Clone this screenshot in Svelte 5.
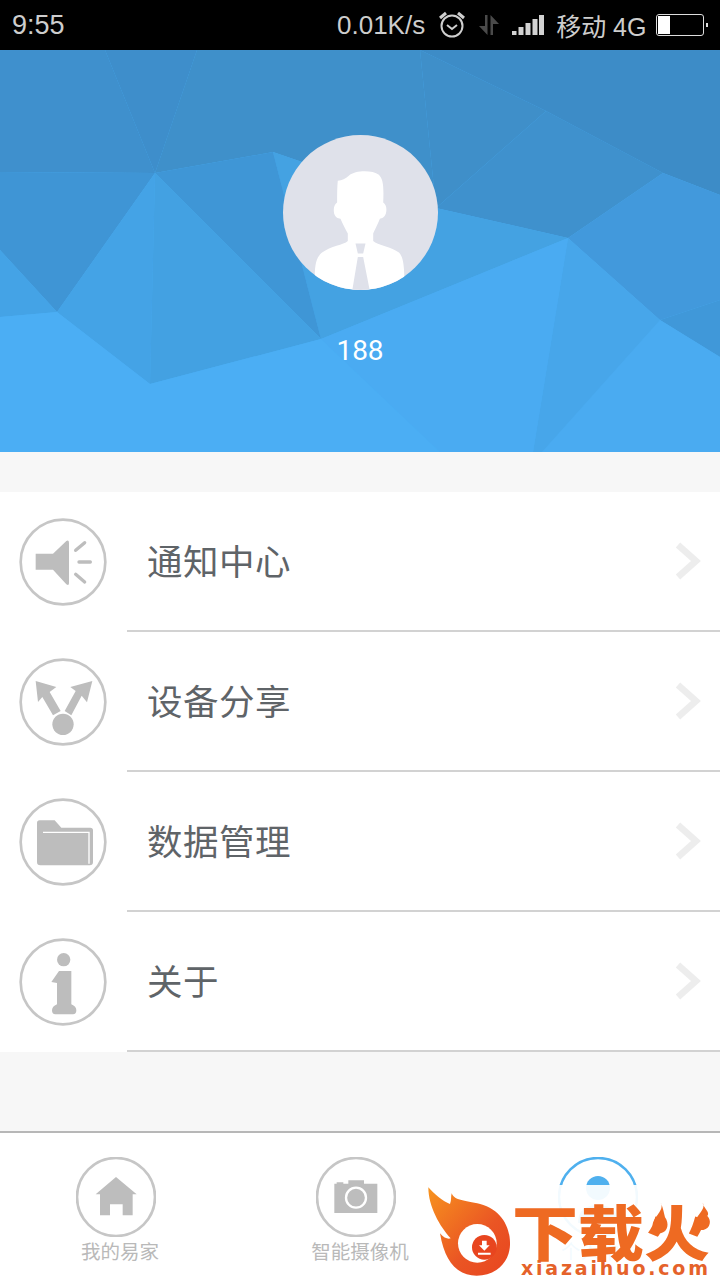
<script>
  const rows = [
    { id: 'notice', label: '通知中心' },
    { id: 'share', label: '设备分享' },
    { id: 'data', label: '数据管理' },
    { id: 'about', label: '关于' }
  ];

  const facets = [
    ['0,50 105,50 155,173 0,172', '#3f90cd'],
    ['105,50 197,50 155,173', '#3e8ecb'],
    ['197,50 420,50 436,208 273,152 155,173', '#3f90ca'],
    ['420,50 546,111 436,208', '#3f8fc9'],
    ['546,111 663,173 568,238 436,208', '#3f91cd'],
    ['420,50 720,50 720,195 663,173 546,111', '#3d8cc7'],
    ['663,173 720,195 720,300 660,320 568,238', '#4299dc'],
    ['720,300 660,320 720,357', '#4098d9'],
    ['660,320 720,357 720,452 542,452', '#4aabf1'],
    ['568,238 660,320 542,452 533,452', '#47a6ea'],
    ['273,152 436,208 568,238 321,339', '#44a2e2'],
    ['155,173 273,152 321,339', '#3f96d6'],
    ['0,172 155,173 57,312 0,250', '#3f95d5'],
    ['0,250 57,312 0,317', '#44a3e6'],
    ['155,173 57,312 150,384', '#44a3e6'],
    ['155,173 321,339 150,384', '#43a1e2'],
    ['0,317 57,312 150,384 321,339 440,452 0,452', '#4baef4'],
    ['568,238 321,339 440,452 533,452', '#4aabf2']
  ];
</script>

<div class="screen">
  <header class="status">
    <span class="time">9:55</span>
    <span class="speed">0.01K/s</span>
    <svg class="alarm" width="28" height="28" viewBox="0 0 28 28" fill="none" stroke="#cfcfcf">
      <circle cx="14" cy="15" r="10.5" stroke-width="2" />
      <path d="M9 14l5 4 5-4" stroke-width="2" />
      <path d="M2 7l6-5M26 7l-6-5" stroke-width="3" />
    </svg>
    <svg class="updown" width="22" height="24" viewBox="0 0 22 24" fill="#4a4a4a">
      <path d="M7 2h2.500v20L1 13h6z" />
      <path d="M12.500 2L21 11h-6v11h-2.500z" />
    </svg>
    <svg class="signal" width="32" height="22" viewBox="0 0 32 22" fill="#d2d2d2">
      <rect x="0" y="17" width="4.500" height="4" />
      <rect x="6.500" y="13" width="5" height="8" />
      <rect x="13.500" y="9" width="5" height="12" />
      <rect x="20.500" y="5" width="5" height="16" />
      <rect x="27" y="1" width="5" height="20" />
    </svg>
    <span class="carrier">移动 4G</span>
    <span class="battery"><span class="level"></span></span>
    <span class="nub"></span>
  </header>

  <section class="banner">
    <svg class="facets" width="720" height="402" viewBox="0 50 720 402">
      <rect x="0" y="50" width="720" height="402" fill="#4baef4" />
      {#each facets as [points, fill]}
        <polygon {points} {fill} />
      {/each}
    </svg>
    <div class="avatar">
      <svg width="155" height="155" viewBox="68 43 464 464">
        <defs>
          <clipPath id="avatar-clip"><circle cx="300" cy="275" r="232" /></clipPath>
        </defs>
        <circle cx="300" cy="275" r="232" fill="#dfe1ea" />
        <g clip-path="url(#avatar-clip)">
          <path
            fill="#fff"
            d="M232 180C245 178 255 175 265 165C285 148 335 148 355 162C368 176 370 195 368 245C376 250 380 262 376 278C372 290 364 292 358 294C350 315 342 328 338 338L338 360C350 372 395 378 415 395C428 408 432 430 432 510L165 510C160 440 165 410 185 395C210 375 250 372 262 360L262 338C255 325 248 312 240 294C232 292 225 290 221 278C218 262 222 250 230 245C230 220 230 200 232 180Z"
          />
          <path fill="#dfe1ea" d="M285 368H315L308 398H292ZM292 408H308L328 510H275Z" />
        </g>
      </svg>
    </div>
    <div class="name">188</div>
  </section>

  <main class="list">
    {#each rows as row}
      <div class="row">
        <div class="row-icon">
          {#if row.id === 'notice'}
            <svg width="88" height="88" viewBox="58 53 264 264">
              <circle cx="190" cy="185" r="127" class="ring" />
              <path class="glyph" d="M108 160H160L200 122Q208 118 208 128V248Q208 258 200 252L160 208H108Z" />
              <path class="ray" d="M228 150L255 127M238 185H272M228 222L255 245" />
            </svg>
          {:else if row.id === 'share'}
            <svg width="88" height="88" viewBox="58 473 264 264">
              <circle cx="190" cy="605" r="127" class="ring" />
              <circle cx="190" cy="672" r="32" class="glyph" />
              <path class="glyph" d="M108 542L170 560L150 575L183 632L160 645L128 590L115 605Z" />
              <path class="glyph" d="M278 542L262 606L246 586L215 645L195 632L228 572L212 560Z" />
            </svg>
          {:else if row.id === 'data'}
            <svg width="88" height="88" viewBox="58 53 264 264">
              <circle cx="190" cy="185" r="127" class="ring" />
              <path class="glyph" d="M112 128Q112 120 120 120H165L185 142H272Q280 142 280 150V245Q280 255 270 255H122Q112 255 112 245Z" />
              <path d="M130 156H268V250" fill="none" stroke="#fff" stroke-width="4" />
            </svg>
          {:else}
            <svg width="88" height="88" viewBox="58 473 264 264">
              <circle cx="190" cy="605" r="127" class="ring" />
              <circle cx="192" cy="538" r="20" class="glyph" />
              <path class="glyph" d="M155 605L178 572H215V672Q230 678 230 690Q230 702 220 702H167Q157 702 157 690Q157 678 172 672V608Z" />
            </svg>
          {/if}
        </div>
        <div class="row-main">
          <span class="row-label">{row.label}</span>
          <svg class="chevron" width="26" height="38" viewBox="0 0 26 38" fill="none" stroke="#ededed" stroke-width="6.500">
            <path d="M3 3L21 19L3 35" />
          </svg>
        </div>
      </div>
    {/each}
  </main>

  <div class="spacer"></div>

  <nav class="tabs">
    <div class="tab">
      <svg class="tab-icon" width="80" height="80" viewBox="228 80 240 240">
        <circle cx="348" cy="200" r="117" class="ring" />
        <path class="glyph" d="M348 140L410 192H398V255H368V222H330V255H300V192H287Z" />
      </svg>
      <span>我的易家</span>
    </div>
    <div class="tab">
      <svg class="tab-icon" width="80" height="80" viewBox="948 80 240 240">
        <circle cx="1068" cy="200" r="117" class="ring" />
        <path class="glyph" d="M1003 160H1010V156H1030V160H1045V150H1092V160H1132V248H1003Z" />
        <circle cx="1068" cy="202" r="30" fill="none" stroke="#fff" stroke-width="7" />
      </svg>
      <span>智能摄像机</span>
    </div>
    <div class="tab active">
      <svg class="tab-icon" width="80" height="80" viewBox="0 0 80 80">
        <circle cx="40" cy="40" r="39" fill="none" stroke="#4fb0ee" stroke-width="2.500" />
        <circle cx="40" cy="31" r="12" fill="#4fb0ee" />
        <path d="M20 66Q20 48 40 48Q60 48 60 66Z" fill="#4fb0ee" />
      </svg>
      <span>个人中心</span>
    </div>

    <!-- watermark sits over the last tab -->
    <div class="watermark">
      <svg class="flame" width="300" height="150" viewBox="0 0 900 450">
        <defs>
          <linearGradient id="flame-fill" x1="0" y1="0" x2="1" y2="1">
            <stop offset="0" stop-color="#f7931e" />
            <stop offset="0.6" stop-color="#ea5524" />
            <stop offset="1" stop-color="#e8451f" />
          </linearGradient>
        </defs>
        <path
          fill="url(#flame-fill)"
          d="M25 172C40 190 70 215 90 222C95 210 92 200 95 190C105 215 140 210 190 225C250 245 272 300 270 345C268 400 225 437 170 437C115 437 75 400 60 310C72 325 85 328 92 325C60 290 25 230 25 172Z"
        />
        <circle cx="172" cy="340" r="58" fill="#fff" />
        <circle cx="193" cy="352" r="37" fill="#e8451f" />
        <path fill="#fff" d="M186 332H200V346H209L193 362L177 346H186ZM174 368H212V374H174Z" />
      </svg>
      <span class="wm-title">下载火</span>
      <span class="wm-url">xiazaihuo.com</span>
      <svg class="flame" width="300" height="150" viewBox="0 0 900 450">
        <path fill="#ee6a22" d="M722 218C735 240 700 260 698 285C697 300 710 310 722 310C745 305 748 280 735 262C732 250 730 235 722 218Z" />
        <path fill="#ee6a22" d="M848 218C860 240 825 255 826 280C828 295 838 302 850 300C872 295 875 270 862 258C872 245 850 235 848 218Z" />
      </svg>
    </div>
  </nav>
</div>

<style>
  :global(body) {
    margin: 0;
    background: #f7f7f7;
  }

  .screen {
    width: 720px;
    height: 1280px;
    display: flex;
    flex-direction: column;
    overflow: hidden;
    font-family: "Noto Sans CJK SC", sans-serif;
    background: #f7f7f7;
  }

  .status {
    height: 50px;
    flex: none;
    background: #000;
    color: #cdcdcd;
    display: flex;
    align-items: center;
    padding-left: 12px;
    font-family: "Liberation Sans", "Noto Sans CJK SC", sans-serif;
    font-size: 26px;
  }

  .time {
    width: 325px;
    font-size: 27px;
  }

  .alarm {
    margin-left: 13px;
  }

  .updown {
    margin-left: 12px;
  }

  .signal {
    margin-left: 12px;
  }

  .carrier {
    margin-left: 12px;
    font-size: 25px;
    white-space: nowrap;
  }

  .battery {
    width: 44px;
    height: 18px;
    margin-left: 10px;
    border: 1px solid #ddd;
    border-radius: 3px;
    padding: 1px;
    display: flex;
    box-sizing: content-box;
  }

  .level {
    width: 12px;
    background: #fff;
  }

  .nub {
    width: 2px;
    height: 4px;
    margin-left: 2px;
    background: #ddd;
  }

  .banner {
    position: relative;
    height: 402px;
    flex: none;
    display: flex;
    flex-direction: column;
    align-items: center;
    padding-top: 85px;
    box-sizing: border-box;
  }

  .facets {
    position: absolute;
    left: 0;
    top: 0;
  }

  .avatar {
    position: relative;
    height: 155px;
  }

  .avatar svg {
    display: block;
  }

  .name {
    position: relative;
    margin-top: 43px;
    color: #fff;
    font-family: Roboto, sans-serif;
    font-size: 28px;
    font-weight: 400;
    line-height: 36px;
  }

  .list {
    margin-top: 40px;
    flex: none;
    background: #fff;
  }

  .row {
    height: 140px;
    display: flex;
  }

  .row-icon {
    width: 127px;
    flex: none;
    padding-left: 19px;
    box-sizing: border-box;
    display: flex;
    align-items: center;
  }

  .row-main {
    flex: 1;
    display: flex;
    align-items: center;
    justify-content: space-between;
    padding: 0 19px 0 20px;
    border-bottom: 2px solid #d2d2d2;
  }

  .row-label {
    margin-top: -4px;
    font-size: 35.500px;
    color: #5f6468;
    letter-spacing: 0.500px;
  }

  .ring {
    fill: none;
    stroke: #c6c6c6;
    stroke-width: 8;
  }

  .glyph {
    fill: #bdbdbd;
  }

  .ray {
    fill: none;
    stroke: #bdbdbd;
    stroke-width: 10;
    stroke-linecap: round;
  }

  .spacer {
    flex: 1;
  }

  .tabs {
    position: relative;
    height: 147px;
    flex: none;
    display: flex;
    background: #fff;
    border-top: 2px solid #b7b7b7;
    box-sizing: content-box;
  }

  .tab {
    flex: 1;
    display: flex;
    flex-direction: column;
    align-items: center;
    padding-top: 24px;
    color: #b9b9b9;
    font-size: 19.500px;
    line-height: 28px;
  }

  .tab-icon {
    display: block;
    margin-right: 8px;
    flex: none;
  }

  .tab.active {
    color: #4fb0ee;
  }

  .tab.active .tab-icon {
    margin-right: 4px;
  }

  .watermark {
    position: absolute;
    left: 420px;
    top: 52px;
    width: 300px;
    height: 95px;
    background: rgba(255, 255, 255, 0.93);
  }

  .flame {
    position: absolute;
    left: 0;
    top: -55px;
  }

  .wm-title {
    position: absolute;
    left: 92px;
    top: 7px;
    color: #ee6a22;
    font-size: 60px;
    font-weight: 900;
    line-height: 76px;
    white-space: nowrap;
    transform: scaleX(1.1);
    transform-origin: left center;
  }

  .wm-url {
    position: absolute;
    left: 101px;
    top: 73px;
    color: #e5622a;
    font-family: "DejaVu Sans", sans-serif;
    font-size: 19px;
    font-weight: 700;
    letter-spacing: 2.800px;
    line-height: 20px;
    white-space: nowrap;
  }
</style>
